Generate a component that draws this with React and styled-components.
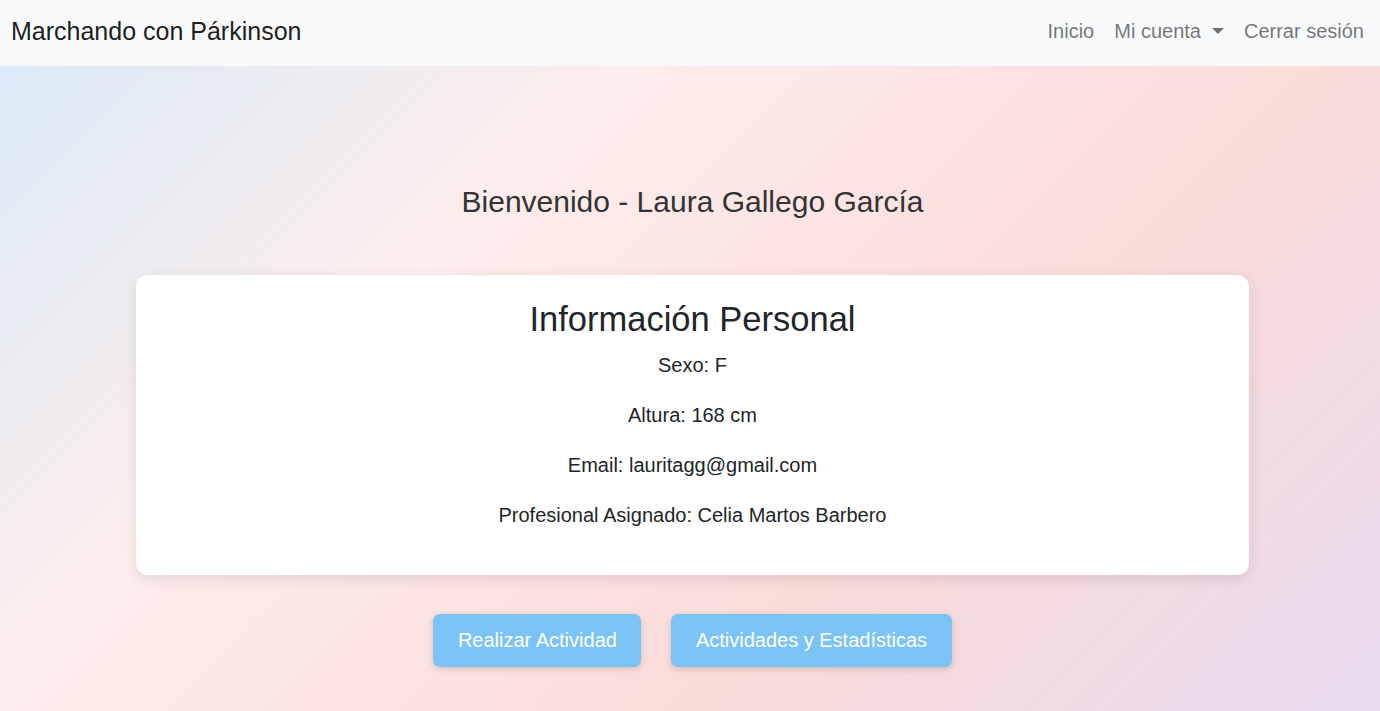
import React from "react";
import styled, { createGlobalStyle } from "styled-components";

const Global = createGlobalStyle`
  html, body { margin: 0; padding: 0; }
  body {
    font-family: "Liberation Sans", Arial, sans-serif;
    color: #212529;
  }
  * { box-sizing: border-box; }
`;

const Page = styled.div`
  min-height: 100vh;
  background: linear-gradient(135deg, #d6eaf8 0%, #fdedec 33%, #fadbd8 67%, #e8daef 100%);
  display: flex;
  flex-direction: column;
`;

const Navbar = styled.nav`
  height: 66px;
  background: #f8f9fa;
  display: flex;
  align-items: center;
  justify-content: space-between;
  padding: 0 6px 0 11px;
`;

const Brand = styled.a`
  font-size: 25px;
  color: rgba(0, 0, 0, 0.9);
  text-decoration: none;
  line-height: 1.5;
  margin-bottom: 2px;
`;

const NavList = styled.ul`
  list-style: none;
  margin: 0 0 4px;
  padding: 0;
  display: flex;
  align-items: center;
`;

const NavLink = styled.a`
  display: flex;
  align-items: center;
  padding: 0 10px;
  font-size: 20px;
  line-height: 1.5;
  color: rgba(0, 0, 0, 0.55);
  text-decoration: none;
  cursor: pointer;
`;

const Caret = styled.span`
  display: inline-block;
  margin-left: 11px;
  width: 0;
  height: 0;
  border-top: 6px solid rgba(0, 0, 0, 0.55);
  border-left: 6px solid transparent;
  border-right: 6px solid transparent;
`;

const Main = styled.main`
  display: flex;
  flex-direction: column;
  align-items: center;
  padding: 118px 0 0 5px;
`;

const Welcome = styled.h4`
  margin: 0;
  font-size: 30px;
  line-height: 36px;
  font-weight: 400;
  color: #333;
`;

const Card = styled.section`
  margin-top: 55px;
  width: 1113px;
  height: 300px;
  background: #fff;
  border-radius: 12px;
  box-shadow: 0 4px 14px rgba(0, 0, 0, 0.1);
  padding: 25px;
  text-align: center;
`;

const CardTitle = styled.h3`
  margin: -2px 0 10px;
  font-size: 34.5px;
  line-height: 42px;
  font-weight: 400;
  color: #212529;
`;

const Info = styled.p`
  margin: 0 0 20px;
  font-size: 20px;
  line-height: 30px;
  color: #212529;
`;

const Actions = styled.div`
  margin-top: 39px;
  display: flex;
  gap: 30px;
`;

const Button = styled.button`
  height: 53px;
  padding: 0 24.5px;
  border: none;
  border-radius: 7px;
  background: #7bc3f4;
  color: #fff;
  font-family: "Liberation Sans", Arial, sans-serif;
  font-size: 20px;
  box-shadow: 0 2px 6px rgba(0, 0, 0, 0.16);
  cursor: pointer;
`;

export default function App() {
  return (
    <>
      <Global />
      <Page>
        <Navbar>
          <Brand href="#">Marchando con Párkinson</Brand>
          <NavList>
            <li><NavLink>Inicio</NavLink></li>
            <li><NavLink>Mi cuenta<Caret /></NavLink></li>
            <li><NavLink>Cerrar sesión</NavLink></li>
          </NavList>
        </Navbar>
        <Main>
          <Welcome>Bienvenido - Laura Gallego García</Welcome>
          <Card>
            <CardTitle>Información Personal</CardTitle>
            <Info>Sexo: F</Info>
            <Info>Altura: 168 cm</Info>
            <Info>Email: lauritagg@gmail.com</Info>
            <Info>Profesional Asignado: Celia Martos Barbero</Info>
          </Card>
          <Actions>
            <Button>Realizar Actividad</Button>
            <Button>Actividades y Estadísticas</Button>
          </Actions>
        </Main>
      </Page>
    </>
  );
}
